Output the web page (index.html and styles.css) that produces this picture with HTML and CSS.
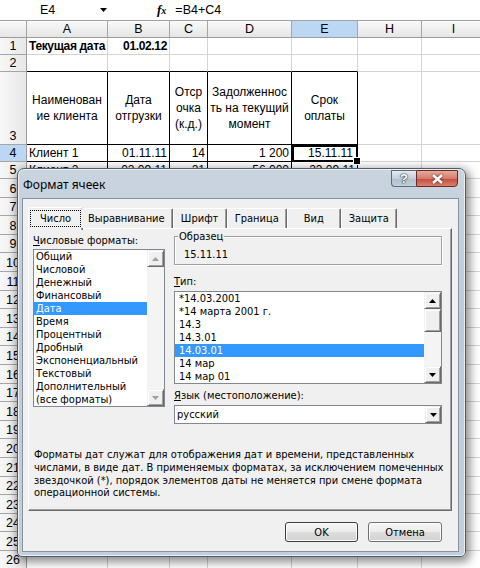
FILE: index.html
```html
<!DOCTYPE html>
<html lang="ru">
<head>
<meta charset="utf-8">
<title>Формат ячеек</title>
<link rel="stylesheet" href="styles.css">
</head>
<body>
<div class="app">
  <div class="fbar">
    <div class="namebox"><span>E4</span><svg class="nb-arrow" viewBox="0 0 7 4"><path d="M0 0H7L3.5 4z"/></svg></div>
    <div class="fx">f<span>x</span></div>
    <div class="formula">=B4+C4</div>
  </div>

  <div class="sheet">
    <div class="ch"></div><div class="ch">A</div><div class="ch">B</div><div class="ch">C</div><div class="ch">D</div><div class="ch on">E</div><div class="ch">H</div><div class="ch">I</div>

    <div class="rh">1</div><div class="c b">Текущая дата</div><div class="c b r">01.02.12</div><div class="c"></div><div class="c"></div><div class="c"></div><div class="c"></div><div class="c"></div>
    <div class="rh">2</div><div class="c tb"></div><div class="c tb"></div><div class="c tb"></div><div class="c tb"></div><div class="c tb"></div><div class="c"></div><div class="c"></div>
    <div class="rh">3</div><div class="c t w">Наименован<br>ие клиента</div><div class="c t w">Дата<br>отгрузки</div><div class="c t w">Отср<br>очка<br>(к.д.)</div><div class="c t w">Задолженнос<br>ть на текущий<br>момент</div><div class="c t w">Срок<br>оплаты</div><div class="c"></div><div class="c"></div>
    <div class="rh on">4</div><div class="c t">Клиент 1</div><div class="c t r">01.11.11</div><div class="c t r">14</div><div class="c t r">1 200</div><div class="c t r sel">15.11.11</div><div class="c"></div><div class="c"></div>
    <div class="rh">5</div><div class="c t">Клиент 2</div><div class="c t r">02.09.11</div><div class="c t r">21</div><div class="c t r">56 000</div><div class="c t r">23.09.11</div><div class="c"></div><div class="c"></div>
    <div class="rh">6</div><div class="c"></div><div class="c"></div><div class="c"></div><div class="c"></div><div class="c"></div><div class="c"></div><div class="c"></div>
    <div class="rh">7</div><div class="c"></div><div class="c"></div><div class="c"></div><div class="c"></div><div class="c"></div><div class="c"></div><div class="c"></div>
    <div class="rh">8</div><div class="c"></div><div class="c"></div><div class="c"></div><div class="c"></div><div class="c"></div><div class="c"></div><div class="c"></div>
    <div class="rh">9</div><div class="c"></div><div class="c"></div><div class="c"></div><div class="c"></div><div class="c"></div><div class="c"></div><div class="c"></div>
    <div class="rh">10</div><div class="c"></div><div class="c"></div><div class="c"></div><div class="c"></div><div class="c"></div><div class="c"></div><div class="c"></div>
    <div class="rh">11</div><div class="c"></div><div class="c"></div><div class="c"></div><div class="c"></div><div class="c"></div><div class="c"></div><div class="c"></div>
    <div class="rh">12</div><div class="c"></div><div class="c"></div><div class="c"></div><div class="c"></div><div class="c"></div><div class="c"></div><div class="c"></div>
    <div class="rh">13</div><div class="c"></div><div class="c"></div><div class="c"></div><div class="c"></div><div class="c"></div><div class="c"></div><div class="c"></div>
    <div class="rh">14</div><div class="c"></div><div class="c"></div><div class="c"></div><div class="c"></div><div class="c"></div><div class="c"></div><div class="c"></div>
    <div class="rh">15</div><div class="c"></div><div class="c"></div><div class="c"></div><div class="c"></div><div class="c"></div><div class="c"></div><div class="c"></div>
    <div class="rh">16</div><div class="c"></div><div class="c"></div><div class="c"></div><div class="c"></div><div class="c"></div><div class="c"></div><div class="c"></div>
    <div class="rh">17</div><div class="c"></div><div class="c"></div><div class="c"></div><div class="c"></div><div class="c"></div><div class="c"></div><div class="c"></div>
    <div class="rh">18</div><div class="c"></div><div class="c"></div><div class="c"></div><div class="c"></div><div class="c"></div><div class="c"></div><div class="c"></div>
    <div class="rh">19</div><div class="c"></div><div class="c"></div><div class="c"></div><div class="c"></div><div class="c"></div><div class="c"></div><div class="c"></div>
    <div class="rh">20</div><div class="c"></div><div class="c"></div><div class="c"></div><div class="c"></div><div class="c"></div><div class="c"></div><div class="c"></div>
    <div class="rh">21</div><div class="c"></div><div class="c"></div><div class="c"></div><div class="c"></div><div class="c"></div><div class="c"></div><div class="c"></div>
    <div class="rh">22</div><div class="c"></div><div class="c"></div><div class="c"></div><div class="c"></div><div class="c"></div><div class="c"></div><div class="c"></div>
    <div class="rh">23</div><div class="c"></div><div class="c"></div><div class="c"></div><div class="c"></div><div class="c"></div><div class="c"></div><div class="c"></div>
    <div class="rh">24</div><div class="c"></div><div class="c"></div><div class="c"></div><div class="c"></div><div class="c"></div><div class="c"></div><div class="c"></div>
    <div class="rh">25</div><div class="c"></div><div class="c"></div><div class="c"></div><div class="c"></div><div class="c"></div><div class="c"></div><div class="c"></div>
    <div class="rh">26</div><div class="c"></div><div class="c"></div><div class="c"></div><div class="c"></div><div class="c"></div><div class="c"></div><div class="c"></div>
  </div>

  <div class="dlg">
    <div class="cap">
      <span class="cap-title">Формат ячеек</span>
      <div class="cap-btns">
        <span class="cb-help">?</span>
        <span class="cb-close"><svg viewBox="0 0 11 10"><path d="M1 1L10 9M10 1L1 9"/></svg></span>
      </div>
    </div>
    <div class="client">
      <div class="tabs">
        <div class="tab on"><span class="focus">Число</span></div>
        <div class="tab">Выравнивание</div>
        <div class="tab">Шрифт</div>
        <div class="tab">Граница</div>
        <div class="tab">Вид</div>
        <div class="tab">Защита</div>
      </div>
      <div class="panel">
        <div class="cols">
          <div class="lcol">
            <div class="lbl"><u>Ч</u>исловые форматы:</div>
            <div class="list lst1">
              <div class="items">
                <div class="it">Общий</div>
                <div class="it">Числовой</div>
                <div class="it">Денежный</div>
                <div class="it">Финансовый</div>
                <div class="it on">Дата</div>
                <div class="it">Время</div>
                <div class="it">Процентный</div>
                <div class="it">Дробный</div>
                <div class="it">Экспоненциальный</div>
                <div class="it">Текстовый</div>
                <div class="it">Дополнительный</div>
                <div class="it">(все форматы)</div>
              </div>
              <div class="vs dis">
                <div class="sbtn"><svg viewBox="0 0 7 4"><path d="M0 4L3.5 0 7 4z"/></svg></div>
                <div class="track"></div>
                <div class="sbtn"><svg viewBox="0 0 7 4"><path d="M0 0H7L3.5 4z"/></svg></div>
              </div>
            </div>
          </div>
          <div class="rcol">
            <div class="grp">
              <span class="grp-lbl">Образец</span>
              <div class="grp-val">15.11.11</div>
            </div>
            <div class="lbl gap1"><u>Т</u>ип:</div>
            <div class="list lst2">
              <div class="items">
                <div class="it">*14.03.2001</div>
                <div class="it">*14 марта 2001 г.</div>
                <div class="it">14.3</div>
                <div class="it">14.3.01</div>
                <div class="it on">14.03.01</div>
                <div class="it">14 мар</div>
                <div class="it">14 мар 01</div>
              </div>
              <div class="vs">
                <div class="sbtn"><svg viewBox="0 0 7 4"><path d="M0 4L3.5 0 7 4z"/></svg></div>
                <div class="thumb"></div>
                <div class="track"></div>
                <div class="sbtn"><svg viewBox="0 0 7 4"><path d="M0 0H7L3.5 4z"/></svg></div>
              </div>
            </div>
            <div class="lbl gap2"><u>Я</u>зык (местоположение):</div>
            <div class="combo">
              <span class="combo-val">русский</span>
              <span class="sbtn dd"><svg viewBox="0 0 7 4"><path d="M0 0H7L3.5 4z"/></svg></span>
            </div>
          </div>
        </div>
        <p class="desc">Форматы дат служат для отображения дат и времени, представленных<br>числами, в виде дат. В применяемых форматах, за исключением помеченных<br>звездочкой (*), порядок элементов даты не меняется при смене формата<br>операционной системы.</p>
      </div>
      <div class="btns">
        <button class="btn def">OK</button>
        <button class="btn">Отмена</button>
      </div>
    </div>
  </div>
</div>
</body>
</html>
```

FILE: styles.css
```css
* { box-sizing: border-box; }
body { margin: 0; background: #fff; }

.app {
  position: relative;
  width: 480px;
  height: 568px;
  overflow: hidden;
  font-family: "Liberation Sans", Arial, sans-serif;
  color: #000;
}

/* formula bar */
.fbar {
  height: 21px;
  display: flex;
  align-items: center;
  border-bottom: 1px solid #a3a3a3;
  font-size: 12.5px;
}
.namebox {
  width: 112px;
  height: 100%;
  display: flex;
  align-items: center;
  padding-left: 40px;
}
.nb-arrow { margin-left: auto; margin-right: 5px; width: 7px; height: 4px; fill: #000; }
.fx {
  margin-left: 45px;
  font-family: "Liberation Serif", serif;
  font-style: italic;
  font-weight: bold;
  font-size: 13px;
}
.fx span { font-size: 10px; }
.formula { margin-left: 9px; }

/* sheet */
.sheet {
  display: grid;
  grid-template-columns: 27px 81px 62px 38px 84px 66px 64px 64px;
  grid-template-rows: 17px 17px 17px 73px 17px 17px repeat(21, 18.6px);
  font-size: 12px;
}
.sheet > div {
  border-right: 1px solid #d4d4d4;
  border-bottom: 1px solid #d4d4d4;
  overflow: hidden;
  white-space: nowrap;
  line-height: 16px;
  padding: 0 2px;
}
.sheet > .ch {
  background: linear-gradient(#f9f9f9, #e6e6e6);
  border-right-color: #a5a5a5;
  border-bottom-color: #9c9c9c;
  text-align: center;
  font-size: 12.5px;
}
.sheet > .rh {
  background: linear-gradient(to right, #f7f7f7, #e8e8e8);
  border-right-color: #9c9c9c;
  border-bottom-color: #a5a5a5;
  display: flex;
  align-items: flex-end;
  justify-content: center;
  padding: 0;
  font-size: 12.5px;
}
.sheet > .on { background: #bcd7f4; }
.sheet > .b { font-weight: bold; letter-spacing: -0.35px; }
.sheet > .tb { border-bottom-color: #000; }
.sheet > .t { border-right-color: #000; border-bottom-color: #000; }
.sheet > .w {
  white-space: normal;
  display: flex;
  align-items: center;
  justify-content: center;
  text-align: center;
}
.sheet > .r { text-align: right; }
.sheet > .sel {
  position: relative;
  overflow: visible;
  outline: 2px solid #000;
  outline-offset: -2px;
  box-shadow: inset 0 0 0 3px #fff;
  padding-right: 4px;
}
.sheet > .sel::after {
  content: "";
  position: absolute;
  right: -4px;
  bottom: -4px;
  width: 6px;
  height: 6px;
  background: #000;
  border: 1px solid #fff;
}

/* dialog */
.dlg {
  position: absolute;
  left: 17px;
  top: 168px;
  width: 449px;
  height: 389px;
  display: flex;
  flex-direction: column;
  padding: 0 6px 4px 4px;
  border: 1px solid #4e5d6e;
  border-radius: 7px 7px 5px 5px;
  background: linear-gradient(#c9d4df, #bdcad8 40%, #c4cfdb);
  box-shadow: 2px 3px 10px 2px rgba(0, 0, 0, 0.45), inset 0 0 0 1px rgba(255, 255, 255, 0.65);
  font-family: "DejaVu Sans", sans-serif;
  font-stretch: condensed;
  font-size: 11px;
}
.cap {
  height: 29px;
  flex: none;
  display: flex;
  align-items: flex-start;
}
.cap-title {
  margin: 8px 0 0 1px;
  line-height: 16px;
  font-family: "Noto Sans", sans-serif;
  font-stretch: normal;
  font-size: 12px;
}
.cap-btns { margin-left: auto; margin-right: 1px; display: flex; margin-top: 1px; }
.cb-help, .cb-close {
  height: 17px;
  display: flex;
  align-items: center;
  justify-content: center;
  border: 1px solid #5d6b7a;
}
.cb-help {
  width: 25px;
  border-right: none;
  border-radius: 0 0 0 4px;
  background: linear-gradient(#e3eaf2, #c4d0dc 50%, #afbfcf 51%, #c2cfdc);
  color: #fff;
  font-family: "Liberation Sans", sans-serif;
  font-weight: bold;
  font-size: 13px;
  text-shadow: 0 0 1px #2c3a48, 0 0 1px #2c3a48, 0 0 2px #2c3a48;
}
.cb-close {
  width: 42px;
  border-color: #6b2a24;
  border-radius: 0 0 4px 0;
  background: linear-gradient(#e9a99c, #d67c6c 50%, #c54a38 51%, #d8826e);
}
.cb-close svg { width: 11px; height: 10px; stroke: #fff; stroke-width: 2.4; filter: drop-shadow(0 0 1px #4a1a14); }

.client {
  flex: 1;
  display: flex;
  flex-direction: column;
  background: #f0f0f0;
  border: 1px solid #8593a3;
}

.tabs {
  display: flex;
  align-items: flex-end;
  height: 21px;
  margin: 8px 0 0 7px;
  position: relative;
  z-index: 1;
}
.tab {
  height: 20px;
  min-width: 54px;
  padding: 0 7px;
  display: flex;
  align-items: center;
  justify-content: center;
  border-top: 1px solid #fff;
  border-left: 1px solid #fff;
  border-right: 1px solid #696969;
  box-shadow: inset -1px 0 0 #a0a0a0;
  border-radius: 2px 2px 0 0;
  background: #f0f0f0;
  white-space: nowrap;
}
.tab.on {
  height: 23px;
  margin: 0 -2px -2px -2px;
  padding: 0 2px 2px 2px;
}
.focus {
  outline: 1px dotted #000;
  line-height: 15px;
  padding: 0 9px;
}
.tab.on + .tab { border-left: none; }

.panel {
  margin: 0 6px 0 5px;
  height: 283px;
  padding: 4px 0 0 0;
  border: 1px solid;
  border-color: #fff #696969 #696969 #fff;
  box-shadow: inset -1px -1px 0 #a0a0a0;
}
.cols { display: flex; align-items: flex-start; }
.lcol { margin-left: 4px; width: 132px; padding-top: 1px; }
.rcol { margin-left: 9px; width: 268px; padding-top: 3px; }
.lbl { line-height: 13px; margin-bottom: 2px; white-space: nowrap; }
.gap1 { margin-top: 10px; margin-bottom: 3px; }
.gap2 { margin-top: 5px; margin-bottom: 3px; }

.list {
  display: flex;
  background: #fff;
  border: 1px solid #828790;
}
.items { flex: 1; }
.it { height: 13px; line-height: 13px; padding-left: 2px; white-space: nowrap; }
.lst2 .it { padding-left: 4px; }
.it.on { background: #3399ff; color: #fff; }
.vs {
  width: 17px;
  display: flex;
  flex-direction: column;
  background: #f4f4f4;
}
.track { flex: 1; }
.sbtn, .thumb {
  background: #f0f0f0;
  border: 1px solid;
  border-color: #f0f0f0 #696969 #696969 #f0f0f0;
  box-shadow: inset 1px 1px 0 #fff, inset -1px -1px 0 #a0a0a0;
}
.sbtn {
  height: 17px;
  flex: none;
  display: flex;
  align-items: center;
  justify-content: center;
}
.sbtn svg { width: 7px; height: 4px; fill: #000; }
.vs.dis .sbtn svg { fill: #a0a0a0; }
.thumb { height: 23px; flex: none; }

.grp {
  height: 29px;
  border: 1px solid #a0a0a0;
  box-shadow: inset 1px 1px 0 #fff, 1px 1px 0 #fff;
}
.grp-lbl {
  display: block;
  width: fit-content;
  margin: -7px 0 0 3px;
  padding: 0 1px;
  line-height: 13px;
  background: #f0f0f0;
}
.grp-val { margin-top: 5px; padding-left: 9px; line-height: 13px; }

.combo {
  height: 19px;
  display: flex;
  align-items: center;
  background: #fff;
  border: 1px solid #828790;
}
.combo-val { padding-left: 2px; flex: 1; }
.dd { width: 16px; height: 17px; }

.desc {
  margin: 25px 0 0 5px;
  line-height: 12.8px;
  white-space: nowrap;
}

.btns {
  display: flex;
  justify-content: flex-end;
  gap: 10px;
  margin: 11px 16px 0 0;
}
.btn {
  width: 73px;
  height: 20px;
  padding: 0;
  font: inherit;
  color: #000;
  border: 1px solid #707070;
  border-radius: 3px;
  background: linear-gradient(#f6f6f6, #ebebeb 50%, #dddddd 51%, #d2d2d2);
  box-shadow: inset 0 0 0 1px #fcfcfc;
}
.btn + .btn { width: 74px; }
.btn.def { border-color: #3c3c3c; }
```
